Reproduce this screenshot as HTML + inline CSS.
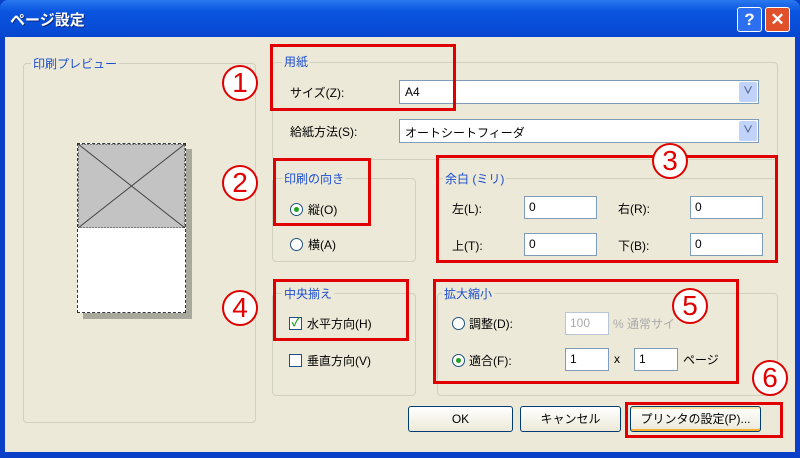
<!DOCTYPE html><html><head><meta charset="utf-8"><style>
*{box-sizing:border-box;margin:0;padding:0}
body{width:800px;height:458px;overflow:hidden;background:#0a3fc8;font-family:"Liberation Sans","Noto Sans CJK JP",sans-serif;font-size:12px;color:#000;position:relative}
.a{position:absolute}
.title{left:0;top:0;width:800px;height:38px;background:linear-gradient(#2a78f0,#0a55e0 30%,#0646d0);border-radius:8px 8px 0 0}
.body{left:5px;top:37px;width:790px;height:415px;background:#ece9d8}
.grp{position:absolute;border:1px solid #d0d0bf;border-radius:4px}
.lbl{position:absolute;background:#ece9d8;color:#1c4fd0;padding:0 2px;font-size:12px}
.red{position:absolute;border:3px solid #e00000}
.num{position:absolute;width:36px;height:36px;border:2px solid #e00000;border-radius:50%;color:#e00000;font-size:28px;line-height:32px;text-align:center;background:#fff}
.combo{position:absolute;height:24px;background:#fff;border:1px solid #7f9db9;padding:4px 5px}
.combo i{position:absolute;right:1px;top:1px;width:18px;height:20px;background:#c1d3fb;border-radius:2px;color:#4d6185;font-style:normal;text-align:center;font-size:10px;line-height:20px;font-weight:bold}
.inp{position:absolute;height:23px;background:#fff;border:1px solid #7f9db9;padding:3px 4px}
.rad{position:absolute;width:13px;height:13px;border:1px solid #1c5180;border-radius:50%;background:#fff}
.rad.on:after{content:"";position:absolute;left:3px;top:3px;width:5px;height:5px;border-radius:50%;background:#21a121}
.chk{position:absolute;width:13px;height:13px;border:1px solid #1c5180;background:#fff;color:#21a121;font-size:11px;line-height:11px;text-align:center;font-weight:bold}
.btn{position:absolute;height:26px;border:1px solid #003c74;border-radius:3px;background:linear-gradient(#fff,#ece9d8);text-align:center;line-height:24px}
</style></head><body>
<div class="a title"></div>
<div class="a" style="left:10px;top:9px;color:#fff;font-size:15px;font-weight:bold;text-shadow:1px 1px #0a2a80">ページ設定</div>
<div class="a" style="left:737px;top:7px;width:25px;height:25px;border:1px solid #fff;border-radius:3px;background:#2c6ff0;color:#fff;font-weight:bold;font-size:17px;text-align:center;line-height:23px">?</div>
<div class="a" style="left:765px;top:7px;width:25px;height:25px;border:1px solid #fff;border-radius:3px;background:#e0502a;color:#fff;font-weight:bold;font-size:17px;text-align:center;line-height:23px">✕</div>
<div class="a body"></div>

<div class="grp" style="left:23px;top:63px;width:233px;height:360px"></div>
<div class="lbl" style="left:31px;top:55px">印刷プレビュー</div>
<div class="a" style="left:83px;top:149px;width:109px;height:170px;background:#a9a89c"></div>
<div class="a" style="left:77px;top:143px;width:109px;height:170px;background:#fff;border:1px dashed #333"></div>
<svg class="a" style="left:78px;top:144px" width="107" height="84"><rect width="107" height="84" fill="#c3c3c3" stroke="#333" stroke-dasharray="2,1"/><path d="M0 0L107 84M107 0L0 84" stroke="#444" fill="none"/></svg>

<div class="grp" style="left:272px;top:62px;width:506px;height:98px"></div>
<div class="lbl" style="left:282px;top:53px">用紙</div>
<div class="a" style="left:290px;top:84px">サイズ(Z):</div>
<div class="combo" style="left:399px;top:80px;width:360px">A4<i>∨</i></div>
<div class="a" style="left:290px;top:123px">給紙方法(S):</div>
<div class="combo" style="left:399px;top:119px;width:360px">オートシートフィーダ<i>∨</i></div>

<div class="grp" style="left:272px;top:178px;width:144px;height:84px"></div>
<div class="lbl" style="left:282px;top:170px">印刷の向き</div>
<div class="rad on" style="left:290px;top:203px"></div><div class="a" style="left:308px;top:201px">縦(O)</div>
<div class="rad" style="left:290px;top:238px"></div><div class="a" style="left:308px;top:236px">横(A)</div>

<div class="grp" style="left:437px;top:178px;width:341px;height:84px"></div>
<div class="lbl" style="left:443px;top:170px">余白 (ミリ)</div>
<div class="a" style="left:452px;top:200px">左(L):</div><div class="inp" style="left:524px;top:196px;width:73px">0</div>
<div class="a" style="left:618px;top:200px">右(R):</div><div class="inp" style="left:690px;top:196px;width:73px">0</div>
<div class="a" style="left:452px;top:237px">上(T):</div><div class="inp" style="left:524px;top:233px;width:73px">0</div>
<div class="a" style="left:618px;top:237px">下(B):</div><div class="inp" style="left:690px;top:233px;width:73px">0</div>

<div class="grp" style="left:272px;top:293px;width:144px;height:103px"></div>
<div class="lbl" style="left:282px;top:285px">中央揃え</div>
<div class="chk" style="left:289px;top:317px">✓</div><div class="a" style="left:307px;top:315px">水平方向(H)</div>
<div class="chk" style="left:289px;top:354px"></div><div class="a" style="left:307px;top:352px">垂直方向(V)</div>

<div class="grp" style="left:437px;top:293px;width:341px;height:103px"></div>
<div class="lbl" style="left:442px;top:285px">拡大縮小</div>
<div class="rad" style="left:452px;top:317px"></div><div class="a" style="left:469px;top:315px">調整(D):</div>
<div class="inp" style="left:565px;top:312px;width:44px;color:#aaa;border-color:#b8c6d4">100</div><div class="a" style="left:613px;top:315px;color:#aaa">% 通常サイ</div>
<div class="rad on" style="left:452px;top:354px"></div><div class="a" style="left:469px;top:352px">適合(F):</div>
<div class="inp" style="left:565px;top:348px;width:44px">1</div><div class="a" style="left:614px;top:352px">x</div>
<div class="inp" style="left:634px;top:348px;width:44px">1</div><div class="a" style="left:683px;top:351px">ページ</div>

<div class="btn" style="left:408px;top:406px;width:105px">OK</div>
<div class="btn" style="left:520px;top:406px;width:101px">キャンセル</div>
<div class="btn" style="left:630px;top:406px;width:131px;box-shadow:inset 0 -2px #f8b030,inset 0 2px #fce2a0">プリンタの設定(P)...</div>

<div class="red" style="left:270px;top:44px;width:186px;height:67px"></div>
<div class="red" style="left:273px;top:158px;width:98px;height:68px"></div>
<div class="red" style="left:436px;top:155px;width:342px;height:108px"></div>
<div class="red" style="left:273px;top:279px;width:136px;height:62px"></div>
<div class="red" style="left:433px;top:279px;width:306px;height:105px"></div>
<div class="red" style="left:625px;top:402px;width:158px;height:36px"></div>
<div class="num" style="left:222px;top:65px">1</div>
<div class="num" style="left:222px;top:165px">2</div>
<div class="num" style="left:652px;top:143px">3</div>
<div class="num" style="left:222px;top:290px">4</div>
<div class="num" style="left:672px;top:288px">5</div>
<div class="num" style="left:752px;top:360px">6</div>
</body></html>
